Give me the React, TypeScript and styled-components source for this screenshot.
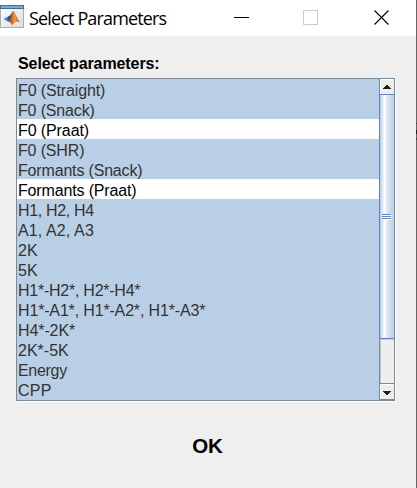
import React from "react";
import styled, { createGlobalStyle } from "styled-components";

const GlobalStyle = createGlobalStyle`
  * { box-sizing: border-box; }
  body { margin: 0; background: #efefef; }
`;

const Window = styled.div`
  display: flex;
  flex-direction: column;
  width: 417px;
  height: 488px;
  overflow: hidden;
  padding-right: 1px;
  background:
    linear-gradient(#656565 0 123px, #404040 123px 124px, #656565 124px 130px, #222 130px 134px, #656565 134px 138px, #404040 138px 140px, #656565 140px) right / 1px 100% no-repeat,
    #efefef;
  font-family: "Liberation Sans", Arial, sans-serif;
`;

const TitleBar = styled.header`
  display: flex;
  height: 36px;
  flex: none;
  background: #fff;
`;

const AppIcon = styled.svg`
  display: block;
  margin-top: 5px;
  width: 24px;
  height: 24px;
`;

const Title = styled.h1`
  flex: 1;
  margin: 0 0 0 5px;
  font: 400 18px/37px "Open Sans", sans-serif;
  letter-spacing: -0.85px;
  white-space: nowrap;
  color: #000;
`;

const Controls = styled.div`
  display: flex;
  padding: 10px 26px 0 0;
  gap: 53px;
`;

const ControlButton = styled.button`
  padding: 0;
  border: 0;
  background: none;
  width: 16px;
  height: 16px;
  svg { display: block; }
  &:last-child { margin-left: 2px; }
`;

const Content = styled.main`
  display: flex;
  flex-direction: column;
  padding: 17px 21px 0 16px;
`;

const Label = styled.div`
  height: 25px;
  padding: 1px 0 0 2px;
  font-size: 16px;
  line-height: 20px;
  font-weight: 700;
  letter-spacing: -0.09px;
  color: #000;
`;

const ListBox = styled.div`
  display: flex;
  width: 379px;
  height: 323px;
  border: 1px solid #7a8a99;
  box-shadow: 1px 1px 0 #fff;
`;

const List = styled.ul`
  flex: 1;
  margin: 0;
  padding: 0;
  overflow: hidden;
  list-style: none;
  background: #b8cfe5;
`;

const Item = styled.li<{ $selected: boolean; $spacing: number }>`
  height: 20px;
  padding: 2px 0 0 1px;
  font-size: 16px;
  line-height: 20px;
  letter-spacing: ${(p) => p.$spacing}px;
  white-space: nowrap;
  background: ${(p) => (p.$selected ? "#b8cfe5" : "#ffffff")};
  color: ${(p) => (p.$selected ? "#333333" : "#000000")};
`;

const ScrollBar = styled.div`
  display: flex;
  flex-direction: column;
  width: 15px;
  border-left: 1px solid #7a8a99;
  background: #eeeeee;
`;

const ArrowButton = styled.button<{ $down?: boolean }>`
  display: flex;
  flex: none;
  justify-content: center;
  align-items: center;
  padding: 0;
  width: 14px;
  height: ${(p) => (p.$down ? 17 : 15)}px;
  border: 0 solid #7a8a99;
  border-top-width: ${(p) => (p.$down ? 1 : 0)}px;
  border-bottom-width: ${(p) => (p.$down ? 1 : 0)}px;
  background: #eeeeee;
  box-shadow: inset 1px 1px 0 #fff;
  svg { position: relative; top: ${(p) => (p.$down ? 1 : 0)}px; }
`;

const Thumb = styled.div`
  display: flex;
  align-items: center;
  justify-content: center;
  flex: none;
  height: 245px;
  margin-left: -1px;
  border: 1px solid #6382bf;
  border-right: 0;
  background: linear-gradient(90deg, #b8cfe5 0 1px, #c9dbeb 1px, #ffffff 5px, #dce8f2 7px, #b8cfe5 14px);
`;

const Track = styled.div`
  flex: 1;
  border-top: 1px solid #b8cfe5;
  border-left: 1px solid #b8c4d0;
`;

const OkButton = styled.button`
  align-self: center;
  margin: 32px 0 0 4px;
  padding: 0;
  border: 0;
  background: none;
  font: 700 20.5px/26px "Liberation Sans", Arial, sans-serif;
  color: #000;
`;

const parameters = [
  { name: "F0 (Straight)", selected: true, spacing: -0.13 },
  { name: "F0 (Snack)", selected: true, spacing: -0.15 },
  { name: "F0 (Praat)", selected: false, spacing: -0.1 },
  { name: "F0 (SHR)", selected: true, spacing: -0.15 },
  { name: "Formants (Snack)", selected: true, spacing: -0.17 },
  { name: "Formants (Praat)", selected: false, spacing: -0.15 },
  { name: "H1, H2, H4", selected: true, spacing: -0.33 },
  { name: "A1, A2, A3", selected: true, spacing: 0.12 },
  { name: "2K", selected: true, spacing: 0 },
  { name: "5K", selected: true, spacing: 0 },
  { name: "H1*-H2*, H2*-H4*", selected: true, spacing: -0.25 },
  { name: "H1*-A1*, H1*-A2*, H1*-A3*", selected: true, spacing: -0.16 },
  { name: "H4*-2K*", selected: true, spacing: -0.1 },
  { name: "2K*-5K", selected: true, spacing: 0 },
  { name: "Energy", selected: true, spacing: -0.3 },
  { name: "CPP", selected: true, spacing: 0.3 },
];

const MatlabIcon = () => (
  <AppIcon viewBox="0 0 24 24">
    <defs>
      <linearGradient id="frame" x2="1" y2="1">
        <stop stopColor="#ffffff" />
        <stop offset="1" stopColor="#d9dce2" />
      </linearGradient>
      <linearGradient id="peak">
        <stop stopColor="#9c2a1d" />
        <stop offset=".45" stopColor="#ee7624" />
        <stop offset=".6" stopColor="#f5a03c" />
        <stop offset="1" stopColor="#b52d12" />
      </linearGradient>
    </defs>
    <rect x=".5" y=".5" width="23" height="22" fill="url(#frame)" stroke="#a5acb4" />
    <path d="M0 0H24V4H0Z" fill="#426f91" />
    <path d="M1 1H23V3H1Z" fill="#7fa9c7" />
    <path d="M3.5 14L8 11.5L10 14L7.5 16.5Z" fill="#3a8fd0" />
    <path d="M8 11.5L10 10.5L13 6L12 13L10 16L7.5 16Z" fill="#245b92" />
    <path d="M7.5 16.3L10 14.8C12 12 12 6 13.5 6C15 6 17 14 20 17.5C17 15.5 15.5 16 12 20.5C11 18 10 16.5 7.5 16.3Z" fill="url(#peak)" />
  </AppIcon>
);

export default function App() {
  return (
    <>
      <GlobalStyle />
      <Window>
        <TitleBar>
          <MatlabIcon />
          <Title>Select Parameters</Title>
          <Controls>
            <ControlButton aria-label="Minimize">
              <svg width="16" height="16" shapeRendering="crispEdges"><path d="M0 7.5H15" stroke="#000" /></svg>
            </ControlButton>
            <ControlButton aria-label="Maximize">
              <svg width="16" height="16" shapeRendering="crispEdges"><rect x=".5" y=".5" width="14" height="14" fill="none" stroke="#ccc" /></svg>
            </ControlButton>
            <ControlButton aria-label="Close">
              <svg width="16" height="16"><path d="M.5 .5L14.5 14.5M14.5 .5L.5 14.5" stroke="#000" strokeWidth="1.1" /></svg>
            </ControlButton>
          </Controls>
        </TitleBar>
        <Content>
          <Label>Select parameters:</Label>
          <ListBox>
            <List>
              {parameters.map((p) => (
                <Item key={p.name} $selected={p.selected} $spacing={p.spacing}>{p.name}</Item>
              ))}
            </List>
            <ScrollBar>
              <ArrowButton aria-label="Scroll up">
                <svg width="8" height="4" shapeRendering="crispEdges"><path d="M3 0H5V1H6V2H7V3H8V4H0V3H1V2H2V1H3Z" fill="#222" /></svg>
              </ArrowButton>
              <Thumb>
                <svg width="10" height="6" shapeRendering="crispEdges">
                  <path d="M0 .5H9M0 2.5H9M0 4.5H9" stroke="#6382bf" />
                  <path d="M1 1.5H10M1 3.5H10M1 5.5H10" stroke="#fff" />
                </svg>
              </Thumb>
              <Track />
              <ArrowButton $down aria-label="Scroll down">
                <svg width="8" height="4" shapeRendering="crispEdges"><path d="M0 0H8V1H7V2H6V3H5V4H3V3H2V2H1V1H0Z" fill="#222" /></svg>
              </ArrowButton>
            </ScrollBar>
          </ListBox>
          <OkButton>OK</OkButton>
        </Content>
      </Window>
    </>
  );
}
